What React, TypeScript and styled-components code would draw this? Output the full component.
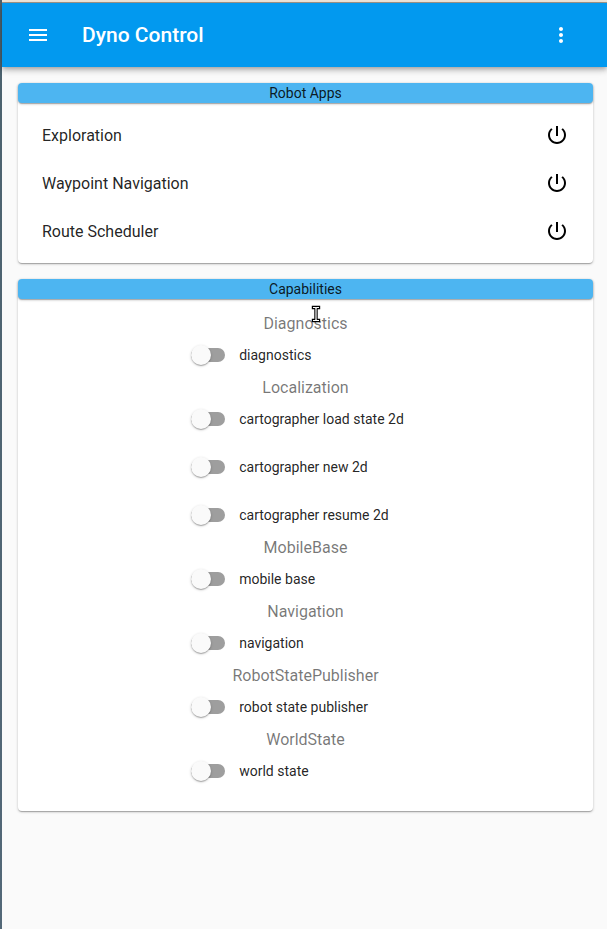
import React from "react";
import styled, { createGlobalStyle } from "styled-components";

const GlobalStyle = createGlobalStyle`
  * { box-sizing: border-box; }
  html, body { margin: 0; padding: 0; }
  body {
    background: #fafafa;
    font-family: Roboto, sans-serif;
    overflow: hidden;
  }
`;

const Screen = styled.div`
  height: 929px;
  display: flex;
  background: #fafafa;
`;

const WindowEdge = styled.div`
  width: 2px;
  flex: none;
  background: linear-gradient(#4c626e, #536878);
`;

const Page = styled.div`
  flex: 1;
  min-width: 0;
`;

const TopEdge = styled.div`
  height: 3px;
  background: #f2e9dc;
  border-bottom: 1px solid #a39a8c;
`;

const AppBar = styled.header`
  height: 64px;
  padding: 0 34px 0 24px;
  display: flex;
  align-items: center;
  background: #0299ef;
  color: #fff;
  box-shadow: 0 2px 4px -1px rgba(0, 0, 0, 0.2), 0 4px 5px 0 rgba(0, 0, 0, 0.14),
    0 1px 10px 0 rgba(0, 0, 0, 0.12);
`;

const Title = styled.h1`
  flex: 1;
  margin: 0 0 0 32px;
  font-size: 21px;
  line-height: 24px;
  font-weight: 500;
`;

const Content = styled.main`
  padding: 16px 14px 16px 16px;
  display: flex;
  flex-direction: column;
  gap: 16px;
`;

const Card = styled.section`
  background: #fff;
  border-radius: 4px;
  box-shadow: 0 1px 3px 0 rgba(0, 0, 0, 0.2), 0 1px 1px 0 rgba(0, 0, 0, 0.14),
    0 2px 1px -1px rgba(0, 0, 0, 0.12);
`;

const CardHeader = styled.h2`
  margin: 0;
  height: 20px;
  border-radius: 4px;
  background: #4db5f1;
  color: rgba(0, 0, 0, 0.87);
  font-size: 14px;
  line-height: 20px;
  font-weight: 400;
  text-align: center;
  box-shadow: 0 1px 3px 0 rgba(0, 0, 0, 0.2), 0 1px 1px 0 rgba(0, 0, 0, 0.14),
    0 2px 1px -1px rgba(0, 0, 0, 0.12);
`;

const List = styled.ul`
  list-style: none;
  margin: 0;
  padding: 8px 24px;
`;

const ListItem = styled.li`
  height: 48px;
  display: flex;
  align-items: center;
  justify-content: space-between;
  color: rgba(0, 0, 0, 0.87);
  font-size: 16px;
  svg { color: #000; }
`;

const Capabilities = styled.div`
  padding: 16px 0;
`;

const GroupName = styled.h3`
  position: relative;
  margin: 0;
  height: 16px;
  font-size: 16px;
  line-height: 18px;
  font-weight: 400;
  text-align: center;
  color: rgba(0, 0, 0, 0.54);
`;

const SwitchRow = styled.label`
  height: 48px;
  padding-left: 173.2px;
  display: flex;
  align-items: center;
  gap: 14px;
  font-size: 14px;
  color: rgba(0, 0, 0, 0.87);
`;

const Track = styled.span`
  width: 34px;
  height: 14px;
  border-radius: 7px;
  background: #9e9e9e;
  display: flex;
  align-items: center;
`;

const Thumb = styled.span`
  width: 20px;
  height: 20px;
  flex: none;
  border-radius: 50%;
  background: #fafafa;
  box-shadow: 0 1px 3px 0 rgba(0, 0, 0, 0.2), 0 1px 1px 0 rgba(0, 0, 0, 0.14),
    0 2px 1px -1px rgba(0, 0, 0, 0.12);
`;

const Pointer = styled.svg`
  position: absolute;
  left: 293px;
  top: -10px;
`;

const Icon = ({ d, size = 24 }: { d: string; size?: number }) => (
  <svg width={size} height={size} viewBox="0 0 24 24" fill="currentColor">
    <path d={d} />
  </svg>
);

const MENU = "M3 18h18v-2H3v2zm0-5h18v-2H3v2zm0-7v2h18V6H3z";
const MORE =
  "M12 8c1.1 0 2-.9 2-2s-.9-2-2-2-2 .9-2 2 .9 2 2 2zm0 2c-1.1 0-2 .9-2 2s.9 2 2 2 2-.9 2-2-.9-2-2-2zm0 6c-1.1 0-2 .9-2 2s.9 2 2 2 2-.9 2-2-.9-2-2-2z";
const POWER =
  "M13 3h-2v10h2V3zm4.83 2.17l-1.42 1.42C17.99 7.86 19 9.81 19 12c0 3.87-3.13 7-7 7s-7-3.13-7-7c0-2.19 1.01-4.14 2.58-5.42L6.17 5.17C4.23 6.82 3 9.26 3 12c0 4.97 4.03 9 9 9s9-4.03 9-9c0-2.74-1.23-5.18-3.17-6.83z";

const apps = ["Exploration", "Waypoint Navigation", "Route Scheduler"];

const groups = [
  { name: "Diagnostics", items: ["diagnostics"] },
  {
    name: "Localization",
    items: ["cartographer load state 2d", "cartographer new 2d", "cartographer resume 2d"],
  },
  { name: "MobileBase", items: ["mobile base"] },
  { name: "Navigation", items: ["navigation"] },
  { name: "RobotStatePublisher", items: ["robot state publisher"] },
  { name: "WorldState", items: ["world state"] },
];

export default function App() {
  return (
    <Screen>
      <GlobalStyle />
      <WindowEdge />
      <Page>
        <TopEdge />
        <AppBar>
          <Icon d={MENU} />
          <Title>Dyno Control</Title>
          <Icon d={MORE} />
        </AppBar>
        <Content>
          <Card>
            <CardHeader>Robot Apps</CardHeader>
            <List>
              {apps.map((app) => (
                <ListItem key={app}>
                  {app}
                  <Icon d={POWER} />
                </ListItem>
              ))}
            </List>
          </Card>
          <Card>
            <CardHeader>Capabilities</CardHeader>
            <Capabilities>
              {groups.map((group, i) => (
                <React.Fragment key={group.name}>
                  <GroupName>
                    {group.name}
                    {i === 0 && (
                      <Pointer width="10" height="18" viewBox="0 0 10 18">
                        <path
                          d="M2.5 2.5H4.3L5 3.2L5.7 2.5H7.5M5 3V15M2.5 15.5H4.3L5 14.8L5.7 15.5H7.5"
                          fill="none"
                          stroke="#000"
                          strokeWidth="3.4"
                          strokeLinecap="square"
                        />
                        <path
                          d="M2 2.5H4.3L5 3.2L5.7 2.5H8M5 3V15M2 15.5H4.3L5 14.8L5.7 15.5H8"
                          fill="none"
                          stroke="#fff"
                          strokeWidth="1.2"
                        />
                      </Pointer>
                    )}
                  </GroupName>
                  {group.items.map((item) => (
                    <SwitchRow key={item}>
                      <Track>
                        <Thumb />
                      </Track>
                      {item}
                    </SwitchRow>
                  ))}
                </React.Fragment>
              ))}
            </Capabilities>
          </Card>
        </Content>
      </Page>
    </Screen>
  );
}
